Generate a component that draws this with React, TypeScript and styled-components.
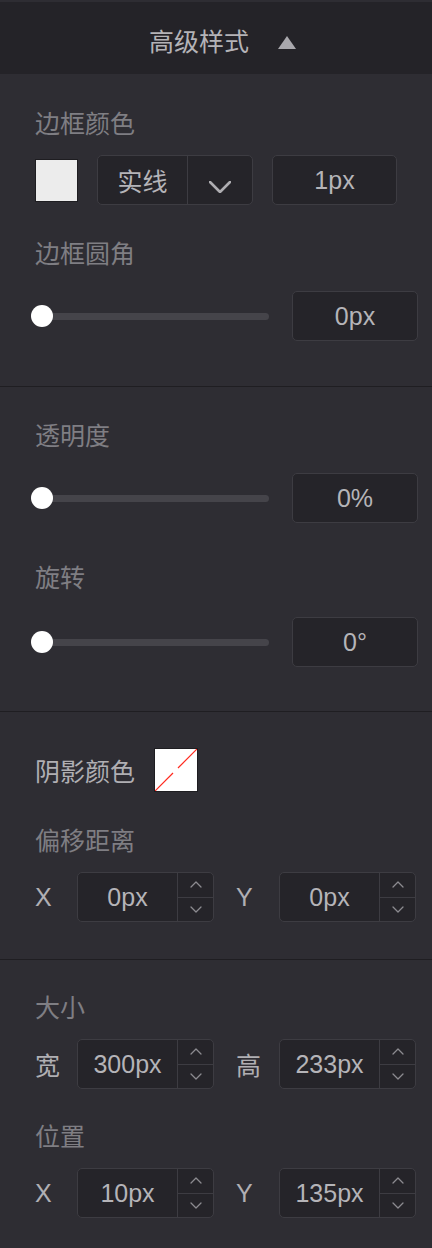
import React from "react";
import styled, { createGlobalStyle } from "styled-components";

const GlobalStyle = createGlobalStyle`
  html, body {
    margin: 0;
    padding: 0;
    background: #2e2d33;
  }
  body {
    font-family: "Liberation Sans", "Noto Sans CJK SC", sans-serif;
    -webkit-font-smoothing: antialiased;
  }
`;

const Panel = styled.div`
  width: 432px;
  min-height: 1248px;
  background: #2e2d33;
  padding-top: 2px;
  box-sizing: border-box;
`;

const Header = styled.div`
  height: 72px;
  background: #242328;
  display: flex;
  align-items: center;
  justify-content: center;
  gap: 29px;
  padding-left: 13px;
  padding-top: 4px;
  box-sizing: border-box;
  color: #b4b3b7;
  font-size: 25px;
`;

const Triangle = styled.span`
  width: 0;
  height: 0;
  border-left: 9.5px solid transparent;
  border-right: 9.5px solid transparent;
  border-bottom: 13px solid #a9a8ad;
  margin-top: 4px;
`;

const Section = styled.div<{ $top: number; $bottom: number; $last?: boolean }>`
  padding: ${(p) => p.$top}px 14px ${(p) => p.$bottom}px 35px;
  border-bottom: ${(p) => (p.$last ? "none" : "1px solid #1f1e22")};
`;

const Label = styled.div<{ $gap?: number }>`
  height: 32px;
  line-height: 32px;
  font-size: 25px;
  color: #7f7e83;
  margin-top: ${(p) => p.$gap ?? 0}px;
`;

const Row = styled.div<{ $gap?: number }>`
  display: flex;
  align-items: center;
  height: 50px;
  margin-top: ${(p) => p.$gap ?? 0}px;
`;

const Swatch = styled.div<{ $size: number; $ml?: number }>`
  width: ${(p) => p.$size}px;
  height: ${(p) => p.$size}px;
  background: #ececec;
  border: 1px solid #1e1d21;
  box-sizing: border-box;
  margin-left: ${(p) => p.$ml ?? 0}px;
  flex: none;
`;

const Box = styled.div<{ $w: number; $ml?: number }>`
  width: ${(p) => p.$w}px;
  height: 50px;
  box-sizing: border-box;
  background: #252429;
  border: 1px solid #3d3c42;
  border-radius: 5px;
  margin-left: ${(p) => p.$ml ?? 0}px;
  display: flex;
  align-items: stretch;
  flex: none;
  color: #b5b4b8;
  font-size: 25px;
`;

const Cell = styled.div<{ $w?: number; $divider?: boolean }>`
  flex: ${(p) => (p.$w ? "none" : "1")};
  width: ${(p) => (p.$w ? `${p.$w}px` : "auto")};
  display: flex;
  align-items: center;
  justify-content: center;
  border-left: ${(p) => (p.$divider ? "1px solid #3d3c42" : "none")};
`;

const Spinner = styled.div`
  width: 35px;
  flex: none;
  display: flex;
  flex-direction: column;
  border-left: 1px solid #3d3c42;
`;

const SpinBtn = styled.div<{ $top?: boolean }>`
  flex: 1;
  display: flex;
  align-items: center;
  justify-content: center;
  border-bottom: ${(p) => (p.$top ? "1px solid #3d3c42" : "none")};
`;

const SliderWrap = styled.div`
  position: relative;
  width: 240px;
  margin-left: -5px;
  height: 50px;
  flex: none;
  display: flex;
  align-items: center;
`;

const Track = styled.div`
  margin-left: 11px;
  width: 228px;
  height: 7px;
  border-radius: 4px;
  background: #45444a;
`;

const Thumb = styled.div`
  position: absolute;
  left: 1px;
  top: 14px;
  width: 22px;
  height: 22px;
  border-radius: 50%;
  background: #ffffff;
`;

const PairLabel = styled.div<{ $w: number; $bright?: boolean; $ml?: number }>`
  width: ${(p) => p.$w}px;
  flex: none;
  font-size: 25px;
  margin-left: ${(p) => p.$ml ?? 0}px;
  color: ${(p) => (p.$bright ? "#b0afb3" : "#7f7e83")};
`;

const DropIcon = styled.div`
  margin-top: 14px;
  display: flex;
`;

const Chevron = ({ up, w = 10, h = 5, sw = 1.3, color = "#8c8b90" }: { up?: boolean; w?: number; h?: number; sw?: number; color?: string }) => (
  <svg width={w + 2} height={h + 2} viewBox={`0 0 ${w + 2} ${h + 2}`}>
    <polyline
      points={up ? `1,${h + 1} ${w / 2 + 1},1 ${w + 1},${h + 1}` : `1,1 ${w / 2 + 1},${h + 1} ${w + 1},1`}
      fill="none"
      stroke={color}
      strokeWidth={sw}
      strokeLinecap="round"
      strokeLinejoin="round"
    />
  </svg>
);

const NumberBox = ({ value }: { value: string }) => (
  <Box $w={137}>
    <Cell>{value}</Cell>
    <Spinner>
      <SpinBtn $top>
        <Chevron up />
      </SpinBtn>
      <SpinBtn>
        <Chevron />
      </SpinBtn>
    </Spinner>
  </Box>
);

const Slider = ({ value, gap }: { value: string; gap: number }) => (
  <Row $gap={gap}>
    <SliderWrap>
      <Track />
      <Thumb />
    </SliderWrap>
    <Box $w={126} $ml={22}>
      <Cell>{value}</Cell>
    </Box>
  </Row>
);

const PairRow = ({ a, av, b, bv, gap = 15 }: { a: string; av: string; b: string; bv: string; gap?: number }) => (
  <Row $gap={gap}>
    <PairLabel $w={42} $bright>{a}</PairLabel>
    <NumberBox value={av} />
    <PairLabel $w={43} $bright $ml={22}>{b}</PairLabel>
    <NumberBox value={bv} />
  </Row>
);

const NoColor = styled(Swatch)`
  background: #ffffff;
  display: flex;
`;

export default function App() {
  return (
    <>
      <GlobalStyle />
      <Panel>
        <Header>
          <span>高级样式</span>
          <Triangle />
        </Header>

        <Section $top={34} $bottom={45}>
          <Label>边框颜色</Label>
          <Row $gap={15}>
            <Swatch $size={43} />
            <Box $w={156} $ml={19}>
              <Cell $w={89}>实线</Cell>
              <Cell $divider>
                <DropIcon>
                  <Chevron w={20} h={10} sw={2.6} color="#aeadb1" />
                </DropIcon>
              </Cell>
            </Box>
            <Box $w={125} $ml={19}>
              <Cell>1px</Cell>
            </Box>
          </Row>
          <Label $gap={33}>边框圆角</Label>
          <Slider value="0px" gap={21} />
        </Section>

        <Section $top={33} $bottom={44}>
          <Label>透明度</Label>
          <Slider value="0%" gap={21} />
          <Label $gap={39}>旋转</Label>
          <Slider value="0°" gap={23} />
        </Section>

        <Section $top={33} $bottom={37}>
          <Row>
            <PairLabel $w={119} $bright>阴影颜色</PairLabel>
            <NoColor $size={44}>
              <svg width="42" height="42" viewBox="0 0 42 42">
                <line x1="0" y1="42" x2="18" y2="24" stroke="#ff2a1f" strokeWidth="1.2" />
                <line x1="23" y1="19" x2="42" y2="0" stroke="#ff2a1f" strokeWidth="1.2" />
              </svg>
            </NoColor>
          </Row>
          <Label $gap={30}>偏移距离</Label>
          <PairRow a="X" av="0px" b="Y" bv="0px" />
        </Section>

        <Section $top={32} $bottom={28} $last>
          <Label>大小</Label>
          <PairRow a="宽" av="300px" b="高" bv="233px" />
          <Label $gap={32}>位置</Label>
          <PairRow a="X" av="10px" b="Y" bv="135px" />
        </Section>
      </Panel>
    </>
  );
}
